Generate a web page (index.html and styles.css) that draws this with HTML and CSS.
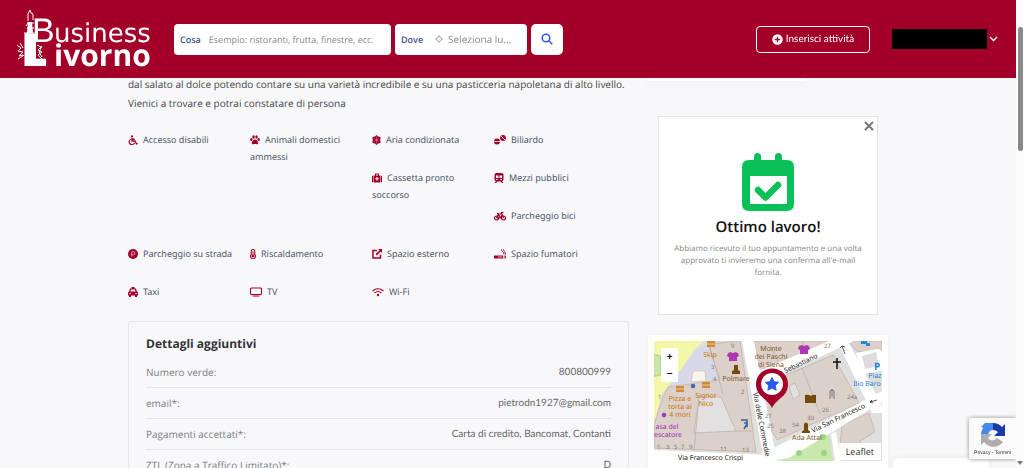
FILE: index.html
```html
<!DOCTYPE html>
<html lang="it">
<head>
<meta charset="utf-8">
<meta name="viewport" content="width=device-width, initial-scale=1">
<title>Business Livorno</title>
<link rel="stylesheet" href="styles.css">
</head>
<body>
<header class="topbar">
  <a class="logo" href="#" aria-label="Business Livorno">
    <svg width="136" height="60" viewBox="0 0 136 60" fill="#fff">
      <path d="M9 25h11v32H9z M12 13h4l1 11h-6z"/>
      <path d="M12 12V5l2-4 1 3 2 1v6M10 17l2-3M8 24h12M11 14h7M11 19h7M1 36l4 3-3 3 5 1-4 4 4-1M4 34l3 5M2 50l6-4M21 36l4 2-3 3 4 2-4 3 4 4-5 1 5 2M26 37l-3 6 3 5" fill="none" stroke="#fff" stroke-width="1"/>
      <text class="logo-b" x="16" y="33">B</text>
      <text class="logo-usiness" x="38" y="33">usiness</text>
      <text class="logo-l" x="5" y="57">L</text>
      <text class="logo-ivorno" x="38" y="57">ivorno</text>
    </svg>
  </a>
  <form class="search">
    <div class="field field-what">
      <label for="what">Cosa</label>
      <input id="what" type="text" placeholder="Esempio: ristoranti, frutta, finestre, ecc.">
    </div>
    <div class="field field-where">
      <label for="where">Dove</label>
      <svg width="8" height="8" viewBox="0 0 16 16" fill="none" stroke="#999" stroke-width="1.6"><circle cx="8" cy="8" r="5"/><path d="M8 0v4M8 12v4M0 8h4M12 8h4"/></svg>
      <input id="where" type="text" placeholder="Seleziona lu...">
    </div>
    <button class="search-btn" type="button" aria-label="Cerca">
      <svg width="12" height="12" viewBox="0 0 12 12" fill="none" stroke="#3355ee" stroke-width="1.5"><circle cx="5" cy="5" r="3.8"/><path d="M7.8 7.8l3.5 3.5"/></svg>
    </button>
  </form>
  <button class="add-btn" type="button">
    <svg width="11" height="11" viewBox="0 0 11 11"><circle cx="5.5" cy="5.5" r="5.2" fill="#fff"/><path d="M5.500 2.800v5.400M2.800 5.500h5.400" stroke="#a20029" stroke-width="1.300"/></svg>
    Inserisci attività
  </button>
  <button class="account" type="button" aria-label="Account">
    <span class="account-name"></span>
    <svg width="9" height="6" viewBox="0 0 9 6" fill="none" stroke="#fff" stroke-width="1.400"><path d="M1 1l3.500 3.500L8 1"/></svg>
  </button>
</header>

<main class="page">
  <section class="content">
    <p class="intro">dal salato al dolce potendo contare su una varietà incredibile e su una pasticceria napoletana di alto livello.<br>Vienici a trovare e potrai constatare di persona</p>
    <ul class="features">
      <li><svg class="w10" viewBox="0 0 20 20"><circle cx="8" cy="2.500" r="2.200"/><path d="M8 5v7h6l3 6 2.500-1M8.500 8.500h5" fill="none" stroke="currentColor" stroke-width="2.600"/><path d="M6 8.500a5.500 5.500 0 1 0 7 7" fill="none" stroke="currentColor" stroke-width="2.400"/></svg>Accesso disabili</li>
      <li><svg class="w10" viewBox="0 0 20 20"><ellipse cx="2.600" cy="9" rx="2.400" ry="3"/><ellipse cx="7" cy="4" rx="2.500" ry="3.400"/><ellipse cx="13" cy="4" rx="2.500" ry="3.400"/><ellipse cx="17.400" cy="9" rx="2.400" ry="3"/><path d="M10 9c3.500 0 7 5 6.500 7.500-.5 3-4 1.500-6.500 1.500s-6 1.500-6.500-1.500C3 14 6.500 9 10 9z"/></svg>Animali domestici ammessi</li>
      <li><svg class="w9" viewBox="0 0 18 20"><path d="M6 3l3-3 3 3 5 1v4l-1 2 1 2v4l-5 1-3 3-3-3-5-1v-4l1-2-1-2V4z"/><path d="M9 3v14M3.500 6.500l11 7M14.500 6.500l-11 7" stroke="#f8f8fb" stroke-width=".6"/></svg>Aria condizionata</li>
      <li><svg class="w12" viewBox="0 0 24 20"><circle cx="6" cy="13" r="6"/><circle cx="18" cy="6" r="5.800"/><path d="M0 13h12M14 2l8 8" stroke="#f8f8fb" stroke-width="1.600"/></svg>Biliardo</li>
      <li><svg class="w10" viewBox="0 0 20 20"><path d="M0 6l3-1v14l-3-1zM20 6l-3-1v14l3-1zM4 5h2V1h8v4h2v14H4zM8 5h4V3H8z"/><path d="M10 8v7M6.500 11.500h7" stroke="#f8f8fb" stroke-width="2.400"/></svg>Cassetta pronto soccorso</li>
      <li><svg class="w10" viewBox="0 0 20 20"><path d="M5 0h10q4 0 4 4v9q0 3-3 3l3 4h-3l-3-3H7l-3 3H1l3-4q-3 0-3-3V4q0-4 4-4z"/><path fill="#f8f8fb" d="M4 5h5v5H4zM11 5h5v5h-5zM4 12h3v2H4zM13 12h3v2h-3z"/></svg>Mezzi pubblici</li>
      <li><svg class="w12" viewBox="0 0 24 20"><g fill="none" stroke="currentColor" stroke-width="2.400"><circle cx="5" cy="14" r="4"/><circle cx="19" cy="14" r="4"/><path d="M5 14l4-8h7l3 8M9 7l4 7H5M13 14l4-7M6 5h4M16 7l-1-4h4"/></g></svg>Parcheggio bici</li>
      <li><svg class="w10" viewBox="0 0 20 20"><circle cx="10" cy="10" r="10"/><path d="M7.500 15V5.500h3.500a2.500 2.500 0 0 1 0 6H7.500" fill="none" stroke="#f8f8fb" stroke-width="1.200"/></svg>Parcheggio su strada</li>
      <li><svg class="w6" viewBox="0 0 12 20"><path d="M6 1a3.500 3.500 0 0 0-3.500 3.500V11a5 5 0 1 0 7 0V4.500A3.500 3.500 0 0 0 6 1z" fill="none" stroke="currentColor" stroke-width="2.200"/><circle cx="6" cy="14.500" r="2.600"/><path d="M6 5v8" stroke="currentColor" stroke-width="2"/></svg>Riscaldamento</li>
      <li><svg class="w10" viewBox="0 0 20 20"><path d="M10 3H2v15h15v-7" fill="none" stroke="currentColor" stroke-width="3"/><path d="M12 0h8v8l-3-3-7 8-3-3 8-7z"/></svg>Spazio esterno</li>
      <li><svg class="w12" viewBox="0 0 24 20"><path d="M0 13h18v6H0zM19.500 13h1.600v6h-1.600zM22.400 13H24v6h-1.600z"/><path d="M8 16h8" stroke="#f8f8fb" stroke-width="1.500"/><path d="M15 1c0 5 5 3 5 10M19 1c0 4 4 4 4 10" fill="none" stroke="currentColor" stroke-width="1.800"/></svg>Spazio fumatori</li>
      <li><svg class="w10" viewBox="0 0 20 20"><path d="M7 0h6v3h3l2 6 2 2v6h-2v3h-4v-3H6v3H2v-3H0v-6l2-2 2-6h3z"/><path fill="#f8f8fb" d="M6 5h8l1 4H5z"/><circle cx="4" cy="13" r="1.500" fill="#f8f8fb"/><circle cx="16" cy="13" r="1.500" fill="#f8f8fb"/></svg>Taxi</li>
      <li><svg class="w12" viewBox="0 0 24 20"><rect x="1" y="2" width="22" height="13" rx="2" fill="none" stroke="currentColor" stroke-width="2.200"/><path d="M5 17h14v2H5z"/></svg>TV</li>
      <li><svg class="w12" viewBox="0 0 24 20"><g fill="none" stroke="currentColor" stroke-width="2.400"><path d="M1 8q11-9 22 0M5 12q7-6 14 0"/></g><circle cx="12" cy="16" r="2.400"/></svg>Wi-Fi</li>
    </ul>
    <section class="details">
      <h2>Dettagli aggiuntivi</h2>
      <dl>
        <div><dt>Numero verde:</dt><dd>800800999</dd></div>
        <div><dt>email*:</dt><dd>pietrodn1927@gmail.com</dd></div>
        <div><dt>Pagamenti accettati*:</dt><dd>Carta di credito, Bancomat, Contanti</dd></div>
        <div><dt>ZTL (Zona a Traffico Limitato)*:</dt><dd>D</dd></div>
      </dl>
    </section>
  </section>

  <aside class="sidebar">
    <div class="previous-card"></div>
    <section class="notice">
      <button class="close" type="button" aria-label="Chiudi"><svg width="10" height="10" viewBox="0 0 10 10" stroke="#777" stroke-width="2"><path d="M1 1l8 8M9 1L1 9"/></svg></button>
      <svg class="calendar" width="52" height="58" viewBox="0 0 52 58"><path fill="#09c158" d="M7 7h5V3.500a3.500 3.500 0 0 1 7 0V7h14V3.500a3.500 3.500 0 0 1 7 0V7h5q7 0 7 7v37q0 7-7 7H7q-7 0-7-7V14q0-7 7-7z"/><path fill="#fff" d="M8 23h37v28H8z"/><path d="M16 37l7.500 7.500L36 32" fill="none" stroke="#09c158" stroke-width="6.500" stroke-linecap="round" stroke-linejoin="round"/></svg>
      <h3>Ottimo lavoro!</h3>
      <p>Abbiamo ricevuto il tuo appuntamento e una volta approvato ti invieremo una conferma all'e-mail fornita.</p>
    </section>
    <section class="map-card">
      <div class="map">
        <svg class="map-art" viewBox="0 0 228 120" preserveAspectRatio="xMidYMid slice">
          <path fill="#e0dfdf" d="M0 0h228v120H0z"/>
          <path fill="#f4f7a8" d="M0 0h49l-9 9-15 23-11 14-6 6-8 30z"/>
          <rect x="-4" y="14" width="11" height="21" rx="4" fill="#c8e6a8" stroke="#a5cf91"/>
          <path fill="#d8d9e8" d="M42 8l12-5 12 36-52 7z"/>
          <path fill="#f7f5ed" stroke="#cfc2b4" stroke-width=".7" d="M39 30h12l1 10-15 1z"/>
          <g fill="#dbd1ca" stroke="#c2b3a8" stroke-width=".8">
            <path d="M14 46l52-7L54 3l32-3 16 111-102-4V84l9-28z"/>
            <path d="M100 0h76l-12 6-50 23-9-3z"/>
            <path d="M132 34l47-20 26 48-82 37-13-23-2-30z"/>
            <path d="M188 84l27-12 6 19-15 9 3 14-24 3z"/>
            <path d="M193 0h35v15l-25-5z"/>
          </g>
          <path fill="#e3e0e1" stroke="#c2b3a8" stroke-width=".8" d="M45 56h22l15 34-42 2zM135 45l6-3 5 12-7 4z"/>
          <path fill="none" stroke="#bcaea4" stroke-width=".8" d="M45 56l-5 54M82 90h16M55 3l14 50M148 27l18 46M116 4l8 17M148 0l3 9"/>
          <path fill="#c8e8ad" d="M127 117l47-26 5 29h-51z"/>
          <path fill="#fff" d="M88 0h12l23 120h-13zM105 41V30L175 0h25L134 31zM183 0h11l34 65v7h-10zM118 120v-12L228 50v11L135 117zM0 109l115 5v6H0z"/>
          <path fill="#fff" d="M202 12l22-4 4 2v20l-20 3z"/>
          <path fill="#dddbe0" d="M208 15l14-4 3 14-14 3z"/>
          <path fill="#fff" d="M177 93l5-2 5 29h-6z"/>
          <g fill="#9bd583"><circle cx="145" cy="112" r="3"/><circle cx="170" cy="112" r="3"/><circle cx="169" cy="96" r="3"/></g>
          <path fill="#d08a32" d="M22 45h8v6h-8zM48 41h8v6h-8zM53 0h8v6h-8z"/><path stroke="#f3d9b0" stroke-width=".8" d="M22 48h8M48 44h8M53 3h8"/>
          <path fill="#ae35b3" d="M74 12l3-1q2 2 4 0l3 1 1 3-2 1v4h-8v-4l-2-1zM145 5l3-1q2 2 4 0l3 1 1 3-2 1v4h-8V9l-2-1z"/>
          <path fill="#734a08" d="M78 33v-3l2-1v-5h4v5l2 1v3zM151 54q4-1 6 1 2-2 5-1v8h-11zM148 92h8v-2l-2-1v-6q-2-3-4 0v6l-2 1z"/>
          <circle cx="39" cy="45" r="2.300" fill="#4c65ba"/><circle cx="10" cy="74" r="2.300" fill="#963eae"/>
          <path d="M87 79h6v4l-3 5M90 82h3v4" fill="none" stroke="#37649b" stroke-width="1.600"/>
          <path d="M183 17v11M179 21h8" stroke="#111" stroke-width="1.500"/>
          <path d="M176 58v-8q2-3 4 0v8M178 48v8" fill="none" stroke="#777"/>
          <path d="M191 13l-3-8-2 2M188 5l3 1M223 59l-7 2 2-2M216 61l3 1" fill="none" stroke="#444" stroke-width=".9"/>
          <path d="M207 0h6v3h-6zM212 2h4v3h-4z" fill="#2689d0"/>
          <g class="num"><text x="77" y="7">9</text><text x="57" y="28">3</text><text x="59" y="40">4</text><text x="4" y="58">1</text><text x="87" y="53">2</text><text x="3" y="108">1</text><text x="12" y="108">3</text><text x="20" y="108">5</text><text x="27" y="108">7</text><text x="35" y="108">9</text><text x="66" y="110">11</text><text x="88" y="111">13</text><text x="111" y="77">21</text><text x="113" y="87">25</text><text x="125" y="92">38</text><text x="138" y="86">34</text><text x="153" y="79">30</text><text x="168" y="71">26</text><text x="193" y="58">24a</text><text x="170" y="7">27</text></g>
          <g class="food"><text x="56" y="16">Skip</text><text x="26" y="60">Pizza e</text><text x="26" y="68">torta ai</text><text x="26" y="76">4 mori</text><text x="52" y="57">Signor</text><text x="52" y="65">Nico</text></g>
          <g class="civic"><text x="82" y="40">Polmare</text><text x="117" y="10">Monte</text><text x="117" y="18">dei Paschi</text><text x="117" y="26">di Siena</text><text x="153" y="99">Ada Attal</text></g>
          <g class="shop"><text x="13" y="88">asa del</text><text x="14" y="96">escatore</text></g>
          <g class="parking"><text class="big" x="223" y="29">P</text><text x="221" y="37">Piaz</text><text x="213" y="45">Ilio Baro</text></g>
          <g class="street"><text transform="translate(126 35) rotate(-26)">n Sebastiano</text><text transform="translate(159 92) rotate(-26)">Via San Francesco</text><text transform="translate(99 52) rotate(79)">Via delle Commedie</text><text x="24" y="119">Via Francesco Crispi</text></g>
          <path fill="#a20029" d="M118 67c-2-5-8-9-12-13a16 16 0 1 1 24 0c-4 4-10 8-12 13z"/><circle cx="118" cy="43" r="11" fill="#fff"/>
          <path fill="#2858ee" stroke="#2858ee" stroke-linejoin="round" d="M118 36.500l2 4.200 4.600.6-3.300 3.200.8 4.700-4.100-2.200-4.100 2.200.8-4.700-3.300-3.200 4.600-.6z"/>
        </svg>
        <div class="zoom"><button type="button">+</button><button type="button">−</button></div>
        <a class="leaflet" href="#">Leaflet</a>
      </div>
    </section>
  </aside>
</main>

<div class="bottom-card"></div>
<div class="captcha">
  <svg width="26" height="26" viewBox="0 0 26 26"><path fill="#4587ed" d="M1 13A12 12 0 0 1 13 1v7q-4 0-5 5zM1 5l4-4h8v7z"/><path fill="#1b3ba8" d="M13 1a12 12 0 0 1 9 4l3-3v12H14l4-4q-2-2-5-2z"/><path fill="#adadad" d="M1 12h11l-4 4q4 5 9 0l6 4A12 12 0 0 1 4 20l-3 3z"/></svg>
  <p><a href="#">Privacy</a> - <a href="#">Termini</a></p>
</div>
<div class="scrollbar"><span class="thumb"></span><svg width="6" height="4" viewBox="0 0 6 4"><path fill="#777" d="M0 0h6L3 4z"/></svg></div>
</body>
</html>
```
FILE: styles.css
```css
* { box-sizing: border-box; }
html { overflow: hidden; }
body {
  margin: 0;
  padding-right: 8px;
  height: 100vh;
  overflow: hidden;
  background: #f8f8fb;
  color: #444;
  font-family: "Open Sans", sans-serif;
  font-size: 10px;
  text-rendering: geometricPrecision;
}
button, input { font: inherit; border: 0; padding: 0; background: none; text-rendering: inherit; }
button { cursor: pointer; }
a { color: inherit; text-decoration: none; }
h2, h3, p, dl, dd, ul { margin: 0; padding: 0; }

.topbar {
  position: fixed;
  z-index: 10;
  top: 0;
  left: 0;
  right: 8px;
  display: flex;
  align-items: center;
  height: 78px;
  padding: 0 18px 0 16px;
  background: #a20029;
}
.logo { display: flex; margin-right: 22px; }
.logo svg { overflow: visible; }
.logo-b { font: 34px "Liberation Sans", sans-serif; }
.logo-usiness { font: 26px "DejaVu Sans", sans-serif; }
.logo-l { font: 800 46px "Open Sans", sans-serif; }
.logo-ivorno { font: 700 30px "Open Sans", sans-serif; }

.search { display: flex; gap: 4px; }
.field {
  display: flex;
  align-items: center;
  height: 31px;
  padding: 0 6px;
  border-radius: 4px;
  background: #fff;
}
.field label { color: #46508f; font-size: 9px; font-weight: 600; }
.field input { flex: 1; min-width: 0; outline: 0; }
.field input::placeholder { color: #888; opacity: 1; }
.field-what { width: 217px; gap: 8px; }
.field-what input { font-size: 9px; }
.field-where { width: 132px; }
.field-where svg { margin: 0 5px 0 12px; }
.field-where input { font-size: 10px; }
.search-btn {
  display: grid;
  place-items: center;
  width: 32px;
  height: 31px;
  border-radius: 5px;
  background: #fff;
}
.add-btn {
  display: flex;
  align-items: center;
  justify-content: center;
  gap: 3px;
  width: 114px;
  height: 27px;
  margin-left: auto;
  border: 1px solid #fff;
  border-radius: 4px;
  color: #fff;
  font-family: Lato, sans-serif;
  font-size: 10px;
}
.account { display: flex; align-items: center; gap: 2px; margin-left: 22px; }
.account-name { width: 95px; height: 20px; background: #000; }

.page {
  display: flex;
  justify-content: space-between;
  max-width: 760px;
  margin: 0 auto;
  padding-top: 75px;
}
.content { width: 501px; }
.sidebar { width: 240px; }
.intro { line-height: 19px; white-space: nowrap; }

.features { list-style: none; display: flow-root; margin-top: 18px; padding-right: 13px; }
.features li {
  float: left;
  width: 25%;
  padding: 0 8px 21px 0;
  color: #4d5664;
  font-family: "Noto Sans", sans-serif;
  font-size: 9px;
  line-height: 17px;
}
.features svg { height: 10px; margin-right: 5px; vertical-align: -2px; color: #a20029; fill: currentColor; }
.w6 { width: 6px; }
.w9 { width: 9px; }
.w10 { width: 10px; }
.w12 { width: 12px; }

.details {
  padding: 12px 17px;
  border: 1px solid #e6e6ea;
  border-radius: 3px;
}
.details h2 { color: #333; font-size: 12px; font-weight: 700; line-height: 20px; }
.details dl { margin-top: 3px; }
.details dl div {
  display: flex;
  justify-content: space-between;
  padding: 7px 0 6px;
  border-bottom: 1px solid #e4e4e7;
  line-height: 17px;
}
.details dt { color: #7d7d80; font-size: 10px; }
.details dd { color: #666; font-family: Lato, sans-serif; font-size: 10px; }

.previous-card { width: 158px; height: 6px; background: #fff; box-shadow: 0 3px 8px #0000000a; }
.notice {
  position: relative;
  display: flex;
  flex-direction: column;
  align-items: center;
  min-height: 199px;
  margin: 35px 10px 0;
  padding: 36px 12px 20px;
  border: 1px solid #e4e4e8;
  background: #fff;
  text-align: center;
}
.close { position: absolute; top: 4px; right: 3px; display: flex; }
.notice h3 { margin-top: 6px; color: #111; font-size: 15px; font-weight: 600; line-height: 20px; }
.notice p { margin-top: 6px; color: #888; font-size: 8px; line-height: 12px; }
.map-card { margin-top: 20px; padding: 6px; background: #fff; box-shadow: 0 0 6px #0000000a; }
.map { position: relative; overflow: hidden; margin-bottom: 20px; }
.map-art { display: block; width: 100%; }
.map-art text { font-family: "Noto Sans", sans-serif; font-size: 7px; text-anchor: middle; }
.map-art .num text { fill: #85776d; font-size: 6px; text-anchor: start; }
.food { fill: #c77400; }
.civic { fill: #80551f; }
.shop { fill: #a32bae; }
.parking { fill: #1683d1; }
.map-art .parking .big { font-size: 10px; font-weight: 700; }
.map-art .street text { fill: #222; text-anchor: start; }
.zoom { position: absolute; top: 7px; left: 7px; display: grid; width: 17px; background: #fff; }
.zoom button { height: 17px; color: #000; font-size: 10px; font-weight: 700; line-height: 17px; }
.leaflet {
  position: absolute;
  right: 1px;
  bottom: 1px;
  padding: 0 7px;
  background: #fffffff0;
  color: #333;
  font-size: 9px;
  line-height: 17px;
}

.bottom-card {
  position: fixed;
  right: 35px;
  bottom: 0;
  width: 96px;
  height: 10px;
  border-radius: 5px 5px 0 0;
  background: #fff;
  box-shadow: 0 0 6px #00000018;
}
.captcha {
  position: fixed;
  right: 8px;
  bottom: 9px;
  display: flex;
  flex-direction: column;
  align-items: center;
  width: 47px;
  padding: 4px 0 1px;
  border-radius: 2px 0 0 2px;
  background: #fafafa;
  box-shadow: 0 0 4px #888;
}
.captcha p { color: #333; font: 5px/10px "Liberation Sans", sans-serif; }
.scrollbar {
  position: fixed;
  z-index: 20;
  top: 0;
  right: 0;
  bottom: 0;
  display: flex;
  flex-direction: column;
  align-items: center;
  justify-content: space-between;
  width: 8px;
  padding: 27px 0 3px;
  background: #fcfcfc;
}
.thumb { width: 5px; height: 124px; border-radius: 3px; background: #898989; }
```
